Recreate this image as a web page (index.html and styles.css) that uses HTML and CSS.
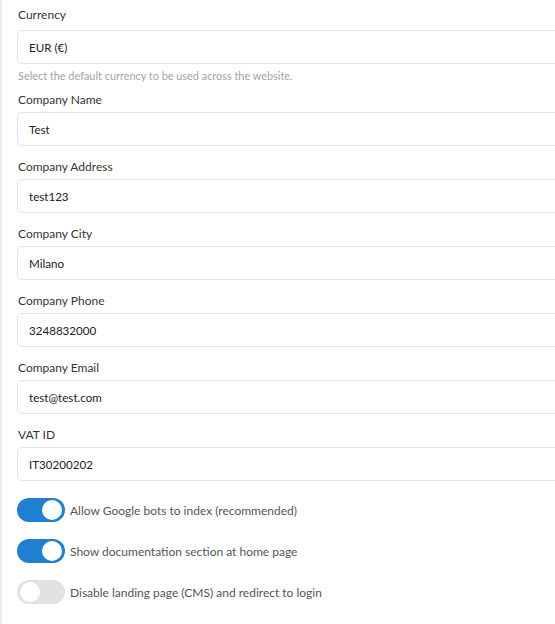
FILE: index.html
```html
<!DOCTYPE html>
<html>
<head>
<meta charset="utf-8">
<link rel="stylesheet" href="styles.css">
</head>
<body>
<div class="page">
  <div class="group first">
    <label class="label">Currency</label>
    <div class="input select">EUR (€)</div>
    <div class="help">Select the default currency to be used across the website.</div>
  </div>
  <div class="group">
    <label class="label">Company Name</label>
    <div class="input">Test</div>
  </div>
  <div class="group">
    <label class="label">Company Address</label>
    <div class="input">test123</div>
  </div>
  <div class="group">
    <label class="label">Company City</label>
    <div class="input">Milano</div>
  </div>
  <div class="group">
    <label class="label">Company Phone</label>
    <div class="input">3248832000</div>
  </div>
  <div class="group">
    <label class="label">Company Email</label>
    <div class="input">test@test.com</div>
  </div>
  <div class="group">
    <label class="label">VAT ID</label>
    <div class="input">IT30200202</div>
  </div>
  <div class="toggles">
    <div class="toggle-row">
      <span class="switch on"><span class="knob"></span></span>
      <span class="toggle-text">Allow Google bots to index (recommended)</span>
    </div>
    <div class="toggle-row">
      <span class="switch on"><span class="knob"></span></span>
      <span class="toggle-text">Show documentation section at home page</span>
    </div>
    <div class="toggle-row">
      <span class="switch"><span class="knob"></span></span>
      <span class="toggle-text">Disable landing page (CMS) and redirect to login</span>
    </div>
  </div>
</div>
</body>
</html>
```
FILE: styles.css
```css
html, body {
  margin: 0;
  padding: 0;
  background: #ffffff;
}
body {
  font-family: Lato, "Open Sans", sans-serif;
  width: 555px;
  height: 624px;
  overflow: hidden;
}
.page {
  border-left: 2px solid #ededed;
  min-height: 624px;
  box-sizing: border-box;
  padding: 6px 0 0 15px;
}
.group {
  display: flex;
  flex-direction: column;
  margin-bottom: 12px;
}
.group.first {
  margin-bottom: 8px;
}
.label {
  display: block;
  font-size: 12px;
  line-height: 18px;
  color: #353535;
  padding-left: 1px;
}
.input {
  width: 560px;
  height: 34px;
  box-sizing: border-box;
  border: 1px solid #e3e1ec;
  border-radius: 5px;
  margin-top: 3px;
  padding-left: 11px;
  display: flex;
  align-items: center;
  font-size: 11.6px;
  color: #222222;
}
.input.select {
  margin-top: 6px;
}
.help {
  font-size: 10.9px;
  line-height: 14px;
  color: #a3a3ab;
  margin-top: 5px;
  padding-left: 1px;
}
.toggles {
  display: flex;
  flex-direction: column;
  gap: 17px;
  margin-top: 17px;
}
.toggle-row {
  display: flex;
  align-items: center;
  gap: 5px;
}
.switch {
  position: relative;
  width: 48px;
  height: 24px;
  border-radius: 12px;
  background: #e2e2e2;
  flex: none;
}
.switch.on {
  background: #1f80d2;
}
.knob {
  position: absolute;
  top: 2px;
  left: 3px;
  width: 20px;
  height: 20px;
  border-radius: 50%;
  background: #ffffff;
}
.switch.on .knob {
  left: 25px;
}
.toggle-text {
  font-size: 12px;
  color: #555555;
}
```
